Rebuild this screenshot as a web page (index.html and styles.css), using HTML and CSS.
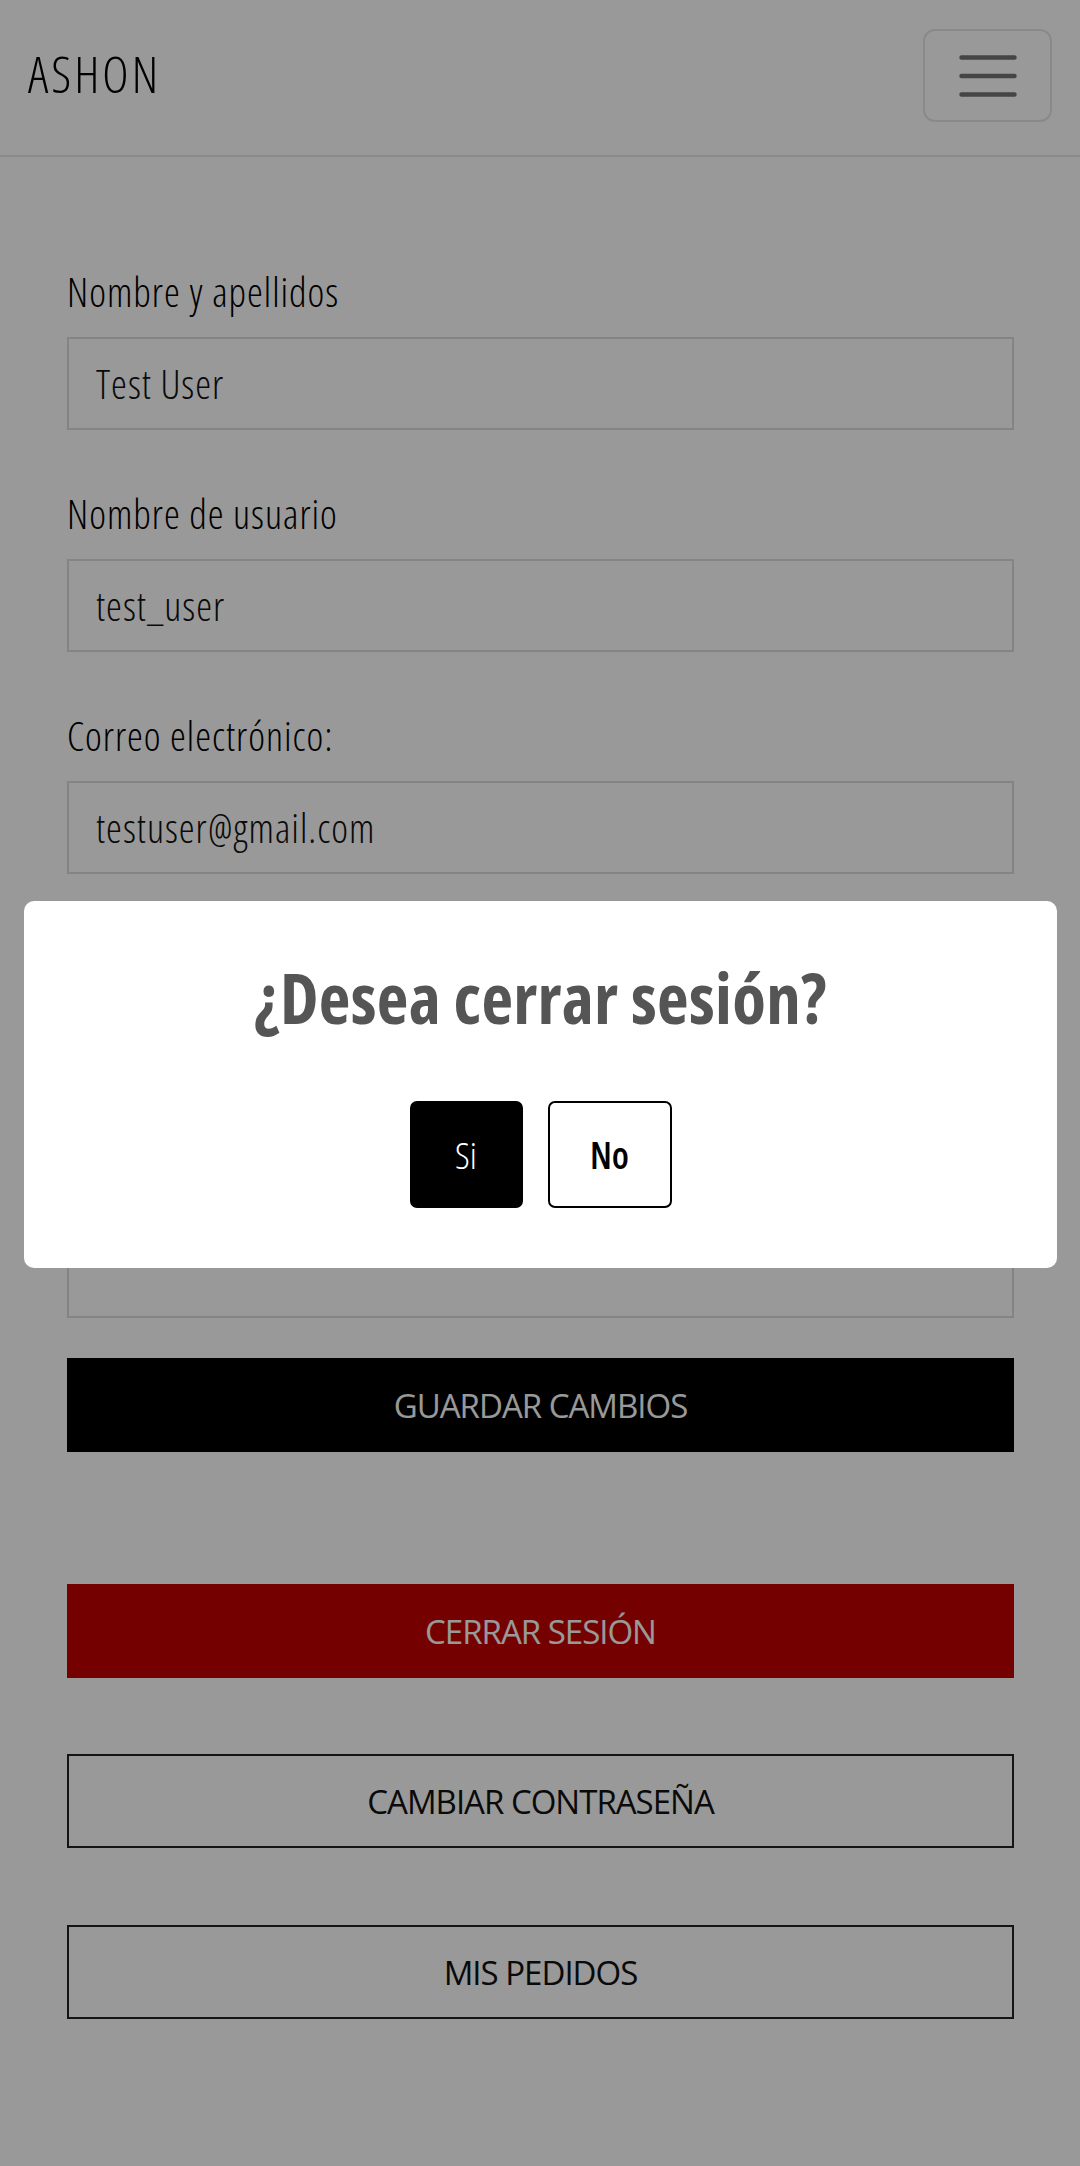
FILE: index.html
```html
<!DOCTYPE html>
<html lang="es">
<head>
<meta charset="utf-8">
<title>ASHON - Mi cuenta</title>
<link rel="stylesheet" href="styles.css">
</head>
<body>
<header class="topbar">
  <a class="brand" href="#">ASHON</a>
  <button class="toggler" type="button" aria-label="Menú">
    <svg class="toggler-icon" width="58" height="46" viewBox="0 0 58 46" aria-hidden="true">
      <path d="M2.5 4.5H55.5M2.5 23H55.5M2.5 41.5H55.5" fill="none" stroke="rgba(0,0,0,0.55)" stroke-width="4.5" stroke-linecap="round"/>
    </svg>
  </button>
</header>

<main class="account">
  <form class="profile-form">
    <div class="fields">
      <div class="field">
        <label class="field-label" for="f-name">Nombre y apellidos</label>
        <input class="field-input" id="f-name" type="text" value="Test User" readonly>
      </div>
      <div class="field">
        <label class="field-label" for="f-user">Nombre de usuario</label>
        <input class="field-input" id="f-user" type="text" value="test_user" readonly>
      </div>
      <div class="field">
        <label class="field-label" for="f-mail">Correo electrónico:</label>
        <input class="field-input" id="f-mail" type="text" value="testuser@gmail.com" readonly>
      </div>
      <div class="field">
        <span class="field-label field-label-empty"></span>
        <input class="field-input" id="f-phone" type="text" value="" readonly aria-label="Teléfono">
      </div>
      <div class="field">
        <span class="field-label field-label-empty"></span>
        <input class="field-input" id="f-addr" type="text" value="" readonly aria-label="Dirección">
      </div>
    </div>
    <button class="btn btn-dark" type="button">GUARDAR CAMBIOS</button>
  </form>

  <div class="actions">
    <button class="btn btn-red" type="button">CERRAR SESIÓN</button>
    <button class="btn btn-outline" type="button">CAMBIAR CONTRASEÑA</button>
    <button class="btn btn-outline" type="button">MIS PEDIDOS</button>
  </div>
</main>

<div class="backdrop"></div>
<div class="dialog" role="dialog" aria-modal="true">
  <h2 class="dialog-title">¿Desea cerrar sesión?</h2>
  <div class="dialog-buttons">
    <button class="dbtn dbtn-yes" type="button">Si</button>
    <button class="dbtn dbtn-no" type="button">No</button>
  </div>
</div>
</body>
</html>
```

FILE: styles.css
```css
* {
  box-sizing: border-box;
}

html, body {
  margin: 0;
  padding: 0;
  background: #ffffff;
}

body {
  font-family: "Open Sans", "Noto Sans", sans-serif;
  font-stretch: 75%;
  color: #212529;
  min-height: 2166px;
}

/* ---------- top bar ---------- */
.topbar {
  height: 157px;
  display: flex;
  align-items: center;
  justify-content: space-between;
  padding: 0 28px 0 28px;
  border-bottom: 2px solid #e6e6e6;
}

.brand {
  font-size: 50px;
  font-stretch: 75%;
  font-weight: 300;
  letter-spacing: 3px;
  line-height: 1;
  color: #000;
  text-decoration: none;
  margin-top: -7px;
}

.toggler {
  width: 129px;
  height: 93px;
  border: 2px solid rgba(0, 0, 0, 0.1);
  border-radius: 12px;
  background: transparent;
  display: flex;
  align-items: center;
  justify-content: center;
  padding: 0;
  margin-top: -4px;
}

.toggler-icon {
  display: block;
}

/* ---------- form ---------- */
.account {
  padding: 0 66px 0 67px;
}

.profile-form {
  padding-top: 112px;
  display: flex;
  flex-direction: column;
}

.fields {
  display: flex;
  flex-direction: column;
  gap: 61px;
}

.field {
  display: flex;
  flex-direction: column;
}

.field-label {
  font-size: 40px;
  font-weight: 350;
  font-stretch: 75%;
  letter-spacing: 1px;
  line-height: 46px;
  color: #000;
  margin-bottom: 22px;
}

.field-label-empty {
  height: 46px;
}

.field-input {
  height: 93px;
  width: 100%;
  border: 2px solid #dcdcdc;
  border-radius: 0;
  padding: 0 27px;
  font-family: inherit;
  font-stretch: 75%;
  font-weight: 350;
  font-size: 40px;
  letter-spacing: 1px;
  color: #111;
  background: #ffffff;
  outline: none;
}

/* ---------- buttons ---------- */
.btn {
  width: 100%;
  height: 94px;
  font-family: inherit;
  font-stretch: 89%;
  font-weight: 400;
  font-size: 33px;
  letter-spacing: -1px;
  border-radius: 0;
  display: flex;
  align-items: center;
  justify-content: center;
  padding: 0;
  cursor: pointer;
}

.btn-dark {
  margin-top: 40px;
  background: #000;
  border: 2px solid #000;
  color: #fff;
}

.actions {
  display: flex;
  flex-direction: column;
  margin-top: 132px;
}

.btn-red {
  background: #c30000;
  border: 2px solid #c30000;
  color: #fff;
  margin-bottom: 76px;
}

.btn-outline {
  background: transparent;
  border: 2px solid #222;
  color: #111;
  margin-bottom: 77px;
}

/* ---------- modal ---------- */
.backdrop {
  position: fixed;
  inset: 0;
  background: rgba(0, 0, 0, 0.4);
}

.dialog {
  position: absolute;
  top: 901px;
  left: 24px;
  width: 1033px;
  height: 367px;
  background: #ffffff;
  border-radius: 10px;
  padding: 54px 0 0 0;
  display: flex;
  flex-direction: column;
  align-items: center;
}

.dialog-title {
  margin: 0;
  font-size: 69px;
  font-stretch: 75%;
  letter-spacing: 0.3px;
  line-height: 84px;
  font-weight: 700;
  color: #555555;
  text-align: center;
}

.dialog-buttons {
  margin-top: 62px;
  display: flex;
  gap: 25px;
}

.dbtn {
  height: 107px;
  padding: 0;
  border-radius: 7px;
  border: 2px solid #000;
  font-family: inherit;
  font-stretch: 75%;
  font-size: 37px;
  display: flex;
  align-items: center;
  justify-content: center;
}

.dbtn-yes {
  background: #000;
  color: #fff;
  font-weight: 350;
  width: 113px;
}

.dbtn-no {
  background: #fff;
  color: #000;
  font-weight: 600;
  width: 124px;
}
```
